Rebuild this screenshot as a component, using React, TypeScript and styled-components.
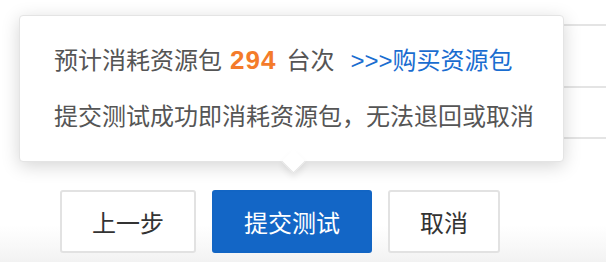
import React from 'react'
import styled, { createGlobalStyle } from 'styled-components'

const GlobalStyle = createGlobalStyle`
  html, body {
    margin: 0;
    padding: 0;
    background: #fff;
  }
  body {
    font-family: "Liberation Sans", "Noto Sans CJK SC", sans-serif;
    width: 606px;
    height: 262px;
    overflow: hidden;
  }
`

const Page = styled.div`
  display: flex;
  flex-direction: column;
  width: 606px;
  height: 262px;
  overflow: hidden;
`

const Table = styled.div`
  display: flex;
  flex-direction: column;
  margin-left: 320px;
`

const Row = styled.div<{ $h: number }>`
  height: ${p => p.$h}px;
  border-bottom: 2px solid #e4e4e4;
`

const Footer = styled.div`
  position: relative;
  flex: 1;
  display: flex;
  align-items: flex-start;
  gap: 16px;
  padding: 51px 0 0 60px;
  background: linear-gradient(to bottom, #fff 0%, #fff 70%, #f8f8f8 88%, #f2f2f2 100%);
`

const Button = styled.button<{ $primary?: boolean }>`
  height: 63px;
  padding: 0 30px;
  border-radius: 3px;
  border: 2px solid ${p => (p.$primary ? '#1265c4' : '#e2e2e2')};
  background: ${p => (p.$primary ? '#1366c6' : '#fff')};
  color: ${p => (p.$primary ? '#fff' : '#333')};
  font-family: "Liberation Sans", "Noto Sans CJK SC", sans-serif;
  font-size: 24px;
  cursor: pointer;
`

const Anchor = styled.div`
  position: relative;
`

const Popover = styled.div`
  position: absolute;
  left: -193px;
  bottom: 91px;
  width: 545px;
  box-sizing: border-box;
  padding: 20px 34px 20px 34px;
  background: #fff;
  border: 1px solid #e4e4e4;
  border-radius: 4px;
  box-shadow: 0 4px 18px rgba(0, 0, 0, 0.17);
  display: flex;
  flex-direction: column;
  gap: 8px;
  z-index: 2;
`

const Arrow = styled.div`
  position: absolute;
  left: 265px;
  bottom: -9px;
  width: 16px;
  height: 16px;
  background: #fff;
  transform: rotate(45deg);
  border-right: 1px solid #e4e4e4;
  border-bottom: 1px solid #e4e4e4;
  box-shadow: 3px 3px 6px rgba(0, 0, 0, 0.08);
`

const Line = styled.div`
  line-height: 48px;
  font-size: 24px;
  color: #555;
  white-space: nowrap;
  position: relative;
  z-index: 1;
`

const Count = styled.span`
  color: #f47b2a;
  font-weight: bold;
  font-size: 26px;
  letter-spacing: 1px;
  margin: 0 10px 0 8px;
`

const Link = styled.a`
  color: #1a6dd0;
  text-decoration: none;
  margin-left: 16px;
  cursor: pointer;
`

export default function App() {
  return (
    <Page>
      <GlobalStyle />
      <Table>
        <Row $h={24} />
        <Row $h={60} />
        <Row $h={49} />
      </Table>
      <Footer>
        <Button>上一步</Button>
        <Anchor>
          <Popover>
            <Line>
              预计消耗资源包<Count>294</Count>台次<Link>&gt;&gt;&gt;购买资源包</Link>
            </Line>
            <Line>提交测试成功即消耗资源包，无法退回或取消</Line>
            <Arrow />
          </Popover>
          <Button $primary>提交测试</Button>
        </Anchor>
        <Button>取消</Button>
      </Footer>
    </Page>
  )
}
